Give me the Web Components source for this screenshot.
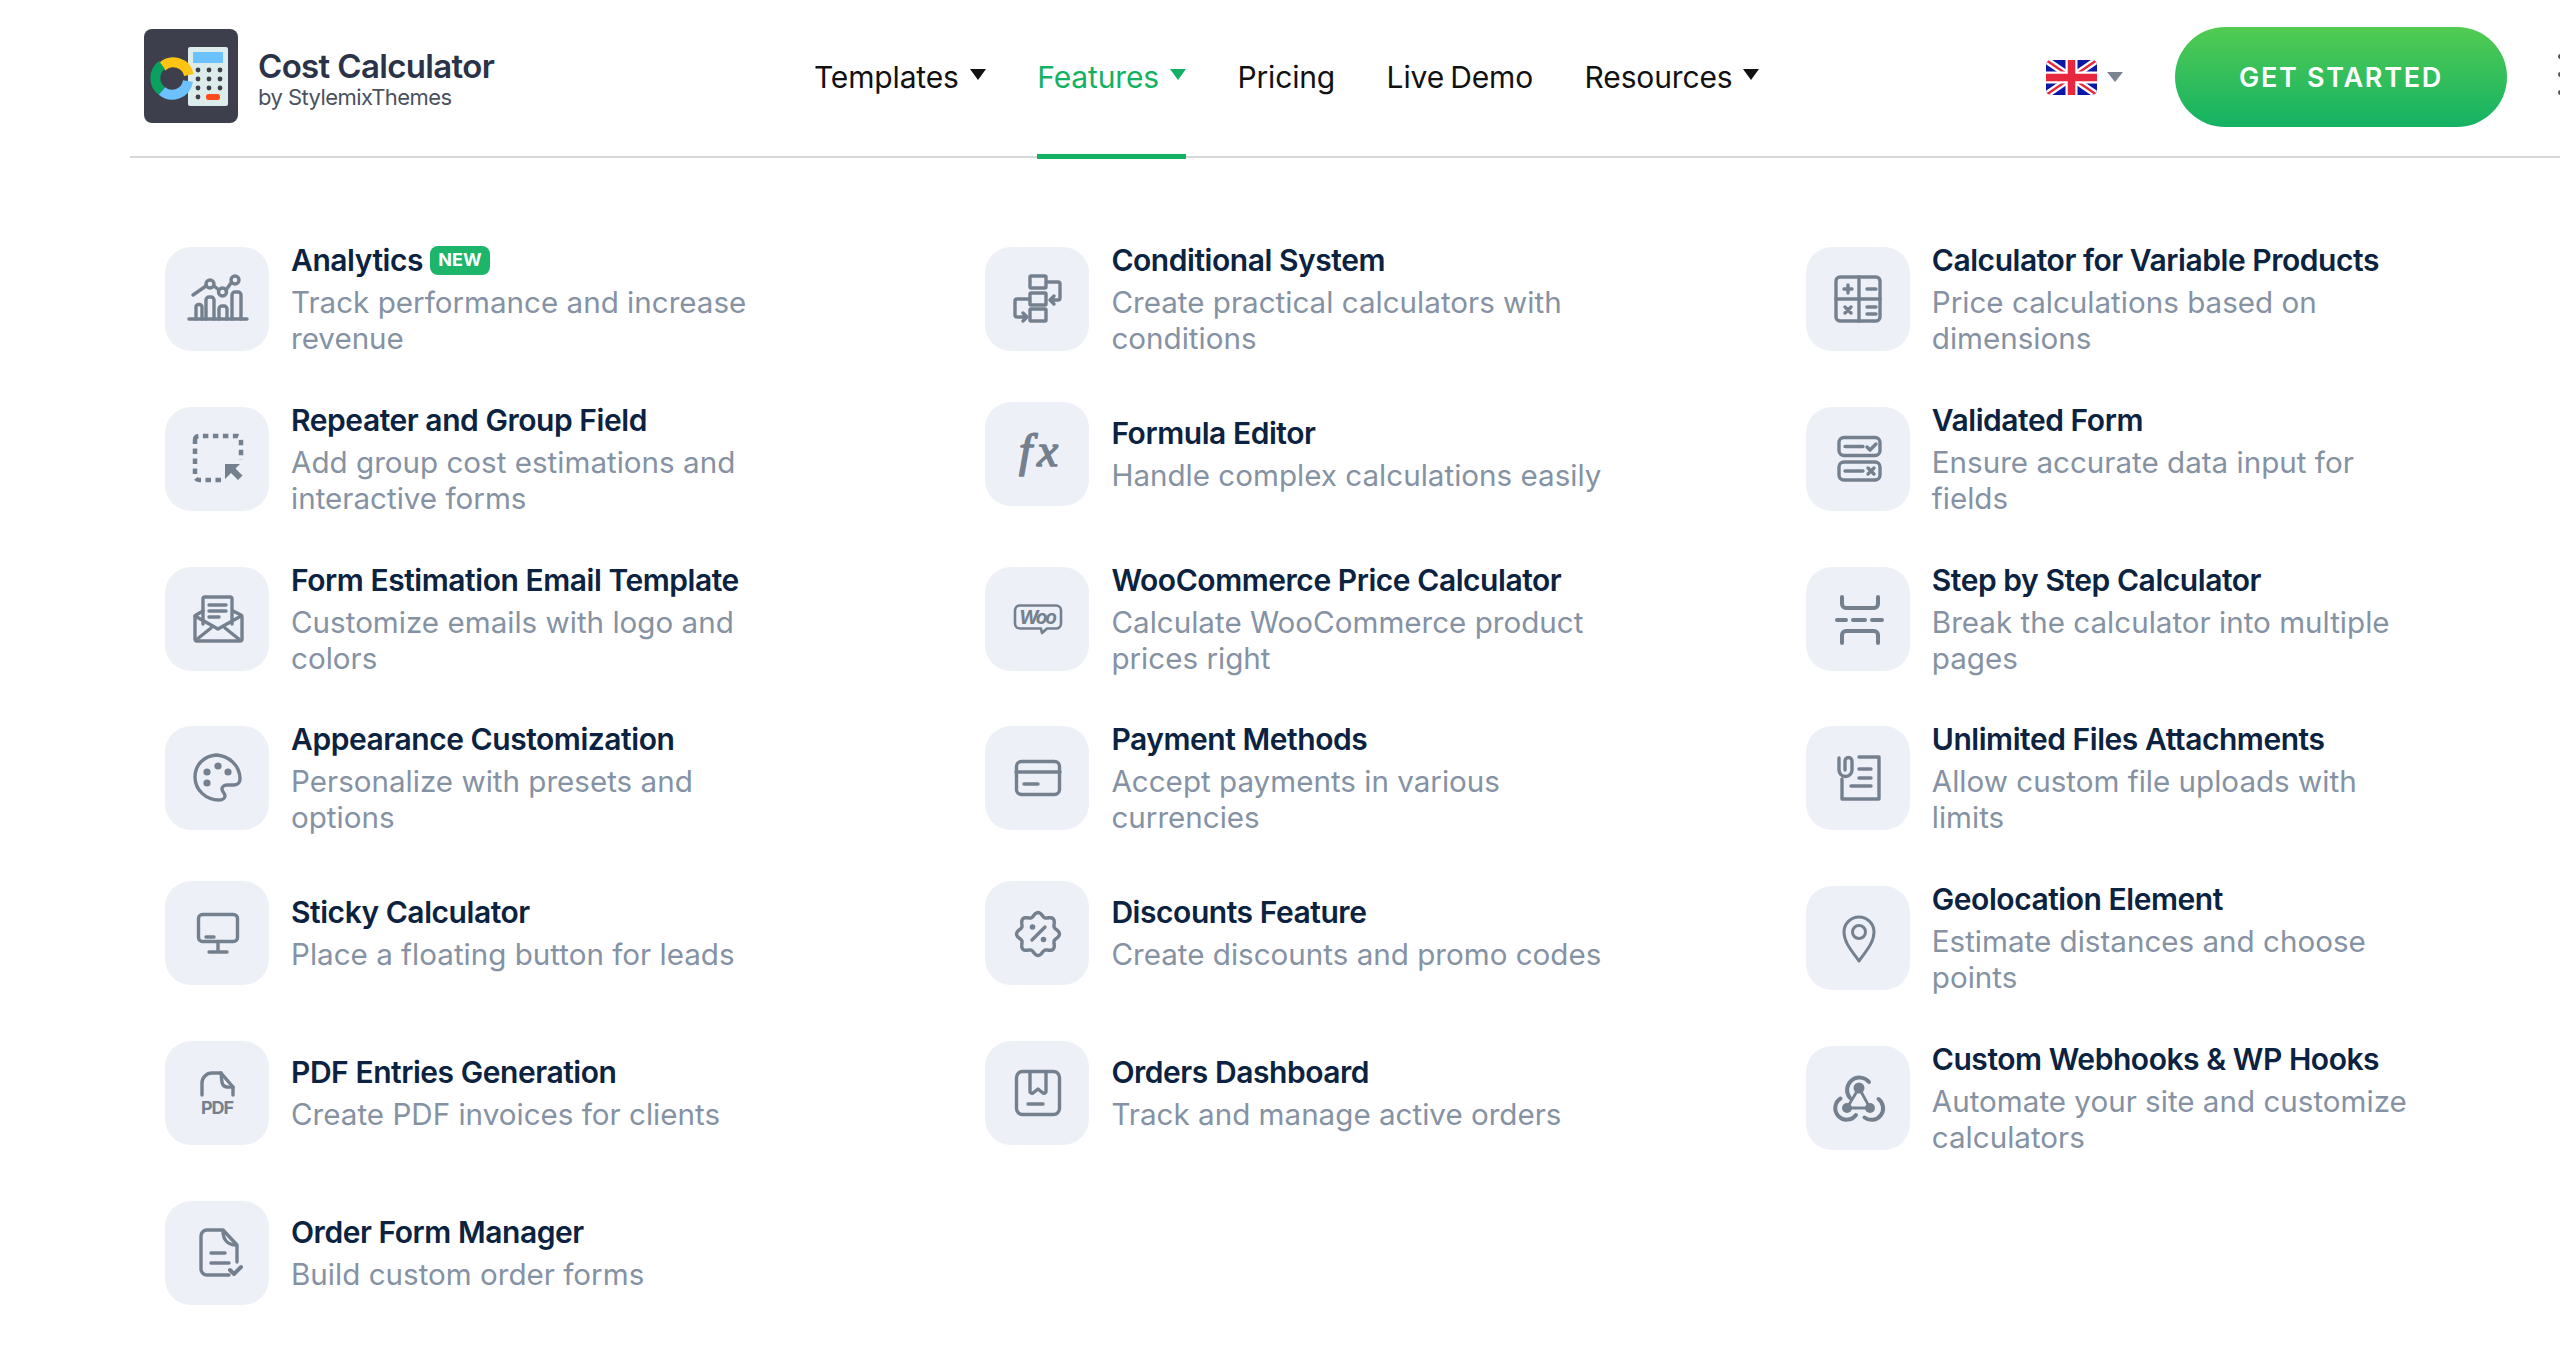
<!DOCTYPE html>
<html lang="en">
<head>
<meta charset="utf-8">
<title>Cost Calculator</title>
<style>
  html, body { margin: 0; background: #fff; overflow-x: hidden; }
  body { font-family: Inter, "Liberation Sans", sans-serif; }
</style>
</head>
<body>
<site-header>
  <nav-item caret>Templates</nav-item>
  <nav-item caret active>Features</nav-item>
  <nav-item>Pricing</nav-item>
  <nav-item>Live Demo</nav-item>
  <nav-item caret>Resources</nav-item>
</site-header>

<feature-grid>
  <feature-item icon="analytics" lines="2"><span slot="title">Analytics</span><new-badge slot="badge">NEW</new-badge>Track performance and increase<br>revenue</feature-item>
  <feature-item icon="repeater" lines="2"><span slot="title">Repeater and Group Field</span>Add group cost estimations and<br>interactive forms</feature-item>
  <feature-item icon="email" lines="2"><span slot="title">Form Estimation Email Template</span>Customize emails with logo and<br>colors</feature-item>
  <feature-item icon="palette" lines="2"><span slot="title">Appearance Customization</span>Personalize with presets and<br>options</feature-item>
  <feature-item icon="monitor"><span slot="title">Sticky Calculator</span>Place a floating button for leads</feature-item>
  <feature-item icon="pdf"><span slot="title">PDF Entries Generation</span>Create PDF invoices for clients</feature-item>
  <feature-item icon="order"><span slot="title">Order Form Manager</span>Build custom order forms</feature-item>

  <feature-item icon="conditional" lines="2" style="grid-column:2;grid-row:1"><span slot="title">Conditional System</span>Create practical calculators with<br>conditions</feature-item>
  <feature-item icon="formula" style="grid-column:2;grid-row:2"><span slot="title">Formula Editor</span>Handle complex calculations easily</feature-item>
  <feature-item icon="woo" lines="2" style="grid-column:2;grid-row:3"><span slot="title">WooCommerce Price Calculator</span>Calculate WooCommerce product<br>prices right</feature-item>
  <feature-item icon="card" lines="2" style="grid-column:2;grid-row:4"><span slot="title">Payment Methods</span>Accept payments in various<br>currencies</feature-item>
  <feature-item icon="discount" style="grid-column:2;grid-row:5"><span slot="title">Discounts Feature</span>Create discounts and promo codes</feature-item>
  <feature-item icon="box" style="grid-column:2;grid-row:6"><span slot="title">Orders Dashboard</span>Track and manage active orders</feature-item>

  <feature-item icon="calc" lines="2" style="grid-column:3;grid-row:1"><span slot="title">Calculator for Variable Products</span>Price calculations based on<br>dimensions</feature-item>
  <feature-item icon="validated" lines="2" style="grid-column:3;grid-row:2"><span slot="title">Validated Form</span>Ensure accurate data input for<br>fields</feature-item>
  <feature-item icon="step" lines="2" style="grid-column:3;grid-row:3"><span slot="title">Step by Step Calculator</span>Break the calculator into multiple<br>pages</feature-item>
  <feature-item icon="files" lines="2" style="grid-column:3;grid-row:4"><span slot="title">Unlimited Files Attachments</span>Allow custom file uploads with<br>limits</feature-item>
  <feature-item icon="pin" lines="2" style="grid-column:3;grid-row:5"><span slot="title">Geolocation Element</span>Estimate distances and choose<br>points</feature-item>
  <feature-item icon="webhook" lines="2" style="grid-column:3;grid-row:6"><span slot="title">Custom Webhooks &amp; WP Hooks</span>Automate your site and customize<br>calculators</feature-item>
</feature-grid>

<script>
// scalloped outline for the discount badge
function badgePath() {
  let d = '';
  for (let i = 0; i < 96; i++) {
    const a = i / 96 * Math.PI * 2;
    const r = 19.5 + 2 * Math.cos(8 * a);
    d += (i ? 'L' : 'M') + (53 + r * Math.sin(a)).toFixed(2) + ' ' + (53 - r * Math.cos(a)).toFixed(2);
  }
  return d + 'Z';
}

const iconMap = {
  analytics: `<path d="M24 72H82"/><path d="M31 72V60a2.5 2.5 0 0 1 2.5-2.5h1A2.5 2.5 0 0 1 37 60V72M41 72V53a3 3 0 0 1 3-3h2a3 3 0 0 1 3 3V72M54 72V62a3 3 0 0 1 3-3h2a3 3 0 0 1 3 3v10M67 72V48a3 3 0 0 1 3-3h3a3 3 0 0 1 3 3v24"/><path d="M28 48L41 39M49 39L54 43M61 43L66 36"/><circle cx="45" cy="37" r="4"/><circle cx="57.5" cy="45" r="4"/><circle cx="70" cy="33" r="4"/>`,
  repeater: `<path d="M30 33a4 4 0 0 1 4-4h38a4 4 0 0 1 4 4v20" stroke-dasharray="5.500 4.500" stroke-linecap="butt" stroke-width="4.500"/><path d="M56 73H34a4 4 0 0 1-4-4V33" stroke-dasharray="5.500 4.500" stroke-linecap="butt" stroke-width="4.500"/><path class="f" d="M60 57h15l-4.500 4.500 7 7-4.500 4.500-7-7L60 72z"/>`,
  email: `<path d="M38 44l-7 4a2 2 0 0 0-1 2v22a2 2 0 0 0 2 2h43a2 2 0 0 0 2-2V50a2 2 0 0 0-1-2l-8-4"/><path d="M30 49l23 13 23-13M31 73l15-12M75 73L60 61"/><path d="M38 57V32a2 2 0 0 1 2-2h25a2 2 0 0 1 2 2v25"/><path d="M44 38h17M44 44h17M44 50h10"/>`,
  palette: `<path d="M53 29C39 29 30 39 30 51c0 13 11 23 24 23 4 0 6-2 6-4 0-3-3-4-3-7 0-2 2-4 5-4h7c4 0 6-3 6-6 0-13-11-24-25-24z"/><circle class="f" cx="42" cy="46" r="3.600"/><circle class="f" cx="53" cy="40" r="3.600"/><circle class="f" cx="63" cy="46" r="3.600"/><circle class="f" cx="42" cy="57" r="3.600"/>`,
  monitor: `<rect x="33.500" y="33.500" width="39" height="27" rx="4"/><path d="M53 61v9M44 71h18M41 56h8"/>`,
  pdf: `<path d="M37 54V42a10 10 0 0 1 10-10h9l12 14v8"/><path d="M56 32c1 5 0 9 2 12s6 2 10 2"/><text x="52.500" y="73" text-anchor="middle" font-size="18" font-weight="700" textLength="33" class="t">PDF</text>`,
  order: `<path d="M64 74H42a6 6 0 0 1-6-6V35a6 6 0 0 1 6-6h16l14 15v17"/><path d="M58 30c0 9 5 14 13 14M46 52h14M46 62h18"/><path d="M65 69l4 4 7-7" stroke-width="4"/>`,
  conditional: `<rect x="45" y="29" width="16" height="12" rx="1"/><rect x="45" y="46" width="16" height="12" rx="1"/><rect x="45" y="62" width="16" height="12" rx="1"/><path d="M62 35h11a2 2 0 0 1 2 2v14a2 2 0 0 1-2 2H65M69 49l-4 4 4 4"/><path d="M44 52H32a2 2 0 0 0-2 2v14a2 2 0 0 0 2 2h10M38 66l4 4-4 4"/>`,
  formula: `<text x="34" y="64" font-size="47" textLength="39" class="t fx">fx</text>`,
  woo: `<path d="M35 38.500h36a5 5 0 0 1 5 5v13a5 5 0 0 1-5 5H62l-5 4.500-1-4.500H35a5 5 0 0 1-5-5v-13a5 5 0 0 1 5-5z" stroke-width="2.600"/><text x="34" y="56.500" font-size="19" font-weight="700" font-style="italic" textLength="38" class="t">Woo</text>`,
  card: `<rect x="31.500" y="35.500" width="43" height="33" rx="5"/><path d="M31 46h44M39 58h14"/>`,
  discount: `<path d="${badgePath()}"/><path d="M60 46L47 59"/><circle class="f" cx="47.500" cy="46" r="2.800"/><circle class="f" cx="58.500" cy="58.500" r="2.800"/>`,
  box: `<rect x="31.500" y="30.500" width="43" height="43" rx="6"/><path d="M45 31v19a2 2 0 0 0 3 2l5-4 5 4a2 2 0 0 0 3-2V31M43 63h15"/>`,
  calc: `<rect x="30" y="30" width="44" height="44" rx="4"/><path d="M53 30v44M30 52h44"/><path d="M38 42h8M42 38v8M61 42h9M39 60l6 6M45 60l-6 6M61 60h9M61 67h9" stroke-width="3.400"/>`,
  validated: `<rect x="33" y="30.500" width="41" height="18" rx="5"/><rect x="33" y="55" width="41" height="18" rx="5"/><path d="M39 39.500h18M39 64h18M61 40l3 3 6-6M62 61l6 6M68 61l-6 6"/>`,
  step: `<path d="M36 30v7a4 4 0 0 0 4 4h28a4 4 0 0 0 4-4v-7M36 76v-8a4 4 0 0 1 4-4h28a4 4 0 0 1 4 4v8" stroke-width="4"/><path d="M31 53h9M47 53h12M66 53h10" stroke-width="4"/>`,
  files: `<path d="M53 31h20v42H36V53"/><path d="M33 32v12a6.500 6.500 0 0 0 13 0V35a3.500 3.500 0 0 0-7 0v9"/><path d="M53 43h12M53 52h12M45 60h20"/>`,
  pin: `<path d="M53 75C45 64 38 56 38 46a15 15 0 0 1 30 0c0 10-7 18-15 29z" stroke-width="3"/><circle cx="53" cy="46" r="6.500" stroke-width="3"/>`,
  webhook: `<circle class="f" cx="53" cy="42" r="5.500"/><circle class="f" cx="41" cy="62" r="5"/><circle class="f" cx="64" cy="62" r="5"/><path d="M53 42L41 62H64L53 42" stroke-width="2.800"/><path d="M44 52A11.500 11.500 0 1 1 63 36M34.500 52.500A11.500 11.500 0 1 0 50 69M58.500 71.500A11.500 11.500 0 1 0 72.500 53" stroke-width="4"/>`
};

class FeatureIcon extends HTMLElement {
  connectedCallback() {
    const name = this.getAttribute('name');
    this.attachShadow({ mode: 'open' }).innerHTML = `
      <style>
        :host { display: block; width: 104px; height: 104px; flex: none; border-radius: 26px; background: #edf1f7; color: #75808f; }
        svg { display: block; width: 104px; height: 104px; fill: none; stroke: currentColor; stroke-width: 3.4; stroke-linecap: round; stroke-linejoin: round; }
        .f { fill: currentColor; stroke: none; }
        .t { fill: currentColor; stroke: none; font-family: Inter, "Liberation Sans", sans-serif; }
        .fx { font-family: "Liberation Serif", serif; font-style: italic; stroke: currentColor; stroke-width: 1.6; }
      </style>
      <svg viewBox="0 0 104 104" aria-hidden="true">${iconMap[name] || ''}</svg>`;
  }
}

class NewBadge extends HTMLElement {
  constructor() {
    super();
    this.attachShadow({ mode: 'open' }).innerHTML = `
      <style>
        :host { display: inline-flex; align-items: center; justify-content: center; width: 60px; height: 29px; margin-left: 7px; border-radius: 8px; background: #1cb569; color: #fff; font-size: 18px; font-weight: 700; line-height: 1; letter-spacing: 0; }
      </style>
      <slot></slot>`;
  }
}

class FeatureItem extends HTMLElement {
  connectedCallback() {
    this.attachShadow({ mode: 'open' }).innerHTML = `
      <style>
        :host { display: flex; align-self: start; align-items: center; gap: 22px; }
        .text { display: flex; flex-direction: column; gap: 6px; white-space: nowrap; }
        .title { display: flex; align-items: center; font-size: 30px; font-weight: 600; line-height: 36px; letter-spacing: -0.45px; color: #0b2240; }
        .desc { font-size: 29.6px; line-height: 36px; color: #8592a3; }
      </style>
      <feature-icon name="${this.getAttribute('icon')}"></feature-icon>
      <div class="text">
        <div class="title"><slot name="title"></slot><slot name="badge"></slot></div>
        <div class="desc"><slot></slot></div>
      </div>`;
  }
}

class FeatureGrid extends HTMLElement {
  constructor() {
    super();
    this.attachShadow({ mode: 'open' }).innerHTML = `
      <style>
        :host { display: grid; grid-template-columns: repeat(3, 820.4px); grid-auto-rows: 112px; row-gap: 47.8px; padding: 84px 0 0 165px; }
      </style>
      <slot></slot>`;
  }
}

class NavItem extends HTMLElement {
  connectedCallback() {
    const active = this.hasAttribute('active');
    const caret = this.hasAttribute('caret');
    this.attachShadow({ mode: 'open' }).innerHTML = `
      <style>
        :host { display: flex; align-items: center; gap: 11px; height: 159px; box-sizing: border-box; margin-bottom: -3px; border-bottom: 5px solid ${active ? '#12b163' : 'transparent'}; color: ${active ? '#12b163' : '#111'}; font-size: 30px; letter-spacing: -0.15px; word-spacing: -2px; }
        i { width: 0; height: 0; margin-bottom: 5px; border: 8px solid transparent; border-top: 11px solid currentColor; border-bottom: 0; }
      </style>
      <slot></slot>${caret ? '<i></i>' : ''}`;
  }
}

class SiteHeader extends HTMLElement {
  constructor() {
    super();
    this.attachShadow({ mode: 'open' }).innerHTML = `
      <style>
        :host { display: flex; align-items: center; height: 158px; box-sizing: border-box; margin-left: 130px; padding-left: 14px; border-bottom: 2px solid #d6d8dc; position: relative; }
        .brand { display: flex; align-items: center; gap: 20px; width: 670px; flex: none; }
        .brand svg { display: block; flex: none; margin-bottom: 4px; }
        .name { font-size: 33px; font-weight: 600; line-height: 38px; letter-spacing: -0.65px; color: #2a3347; }
        .by { font-size: 22px; line-height: 25px; letter-spacing: -0.55px; color: #4a5160; }
        nav { display: flex; gap: 51.5px; }
        .right { display: flex; align-items: center; margin-left: auto; margin-top: -2px; }
        .flag { display: block; margin-right: 10px; }
        .lang { width: 0; height: 0; margin-right: 52px; border: 8px solid transparent; border-top: 10px solid #7b8492; border-bottom: 0; }
        .cta { display: flex; align-items: center; justify-content: center; width: 332px; height: 100px; border-radius: 50px; margin-right: 53px; background: linear-gradient(#52cb52, #14b264); color: #fff; font-size: 27px; font-weight: 600; letter-spacing: 1.7px; }
        .more { position: absolute; right: -3px; top: 54px; width: 5px; display: flex; flex-direction: column; gap: 13px; }
        .more b { width: 5px; height: 5px; border-radius: 50%; background: #4a5160; }
      </style>
      <div class="brand">
        <svg width="94" height="94" viewBox="0 0 94 94" aria-hidden="true">
          <rect width="94" height="94" rx="8" fill="#3e3f4c"/>
          <rect x="44" y="18" width="40" height="59" rx="2" fill="#dcecea"/>
          <rect x="49" y="23" width="30" height="11" fill="#6cc2ff"/>
          <g fill="#3e3f4c">
            <circle cx="54" cy="41" r="2.400"/><circle cx="65" cy="41" r="2.400"/><circle cx="76" cy="41" r="2.400"/>
            <circle cx="54" cy="50" r="2.400"/><circle cx="65" cy="50" r="2.400"/><circle cx="76" cy="50" r="2.400"/>
            <circle cx="54" cy="59" r="2.400"/><circle cx="65" cy="59" r="2.400"/><circle cx="76" cy="59" r="2.400"/>
            <circle cx="54" cy="68" r="2.400"/>
          </g>
          <rect x="62" y="65" width="14" height="6" rx="2.500" fill="#ff4a1c"/>
          <g fill="none" stroke-width="10">
            <path d="M18 38A16 16 0 0 1 45 46" stroke="#ffc512"/>
            <path d="M18 62A16 16 0 0 1 18 36" stroke="#0ba060"/>
            <path d="M44 52A16 16 0 0 1 18 62" stroke="#6cc2ff"/>
          </g>
        </svg>
        <div>
          <div class="name">Cost Calculator</div>
          <div class="by">by StylemixThemes</div>
        </div>
      </div>
      <nav><slot></slot></nav>
      <div class="right">
        <svg class="flag" width="51" height="35" viewBox="0 0 51 35" aria-hidden="true">
          <defs><clipPath id="fc"><rect width="51" height="35" rx="5"/></clipPath></defs>
          <g clip-path="url(#fc)">
            <rect width="51" height="35" fill="#0a17a7"/>
            <path d="M0 0L51 35M51 0L0 35" stroke="#fff" stroke-width="7"/>
            <path d="M0 0L51 35M51 0L0 35" stroke="#e6273e" stroke-width="2.400"/>
            <path d="M25.500 0V35M0 17.500H51" stroke="#fff" stroke-width="12"/>
            <path d="M25.500 0V35M0 17.500H51" stroke="#e6273e" stroke-width="7.500"/>
          </g>
        </svg>
        <span class="lang"></span>
        <div class="cta">GET STARTED</div>
      </div>
      <div class="more"><b></b><b></b><b></b></div>`;
  }
}

customElements.define('feature-icon', FeatureIcon);
customElements.define('new-badge', NewBadge);
customElements.define('feature-item', FeatureItem);
customElements.define('feature-grid', FeatureGrid);
customElements.define('nav-item', NavItem);
customElements.define('site-header', SiteHeader);
</script>
</body>
</html>
